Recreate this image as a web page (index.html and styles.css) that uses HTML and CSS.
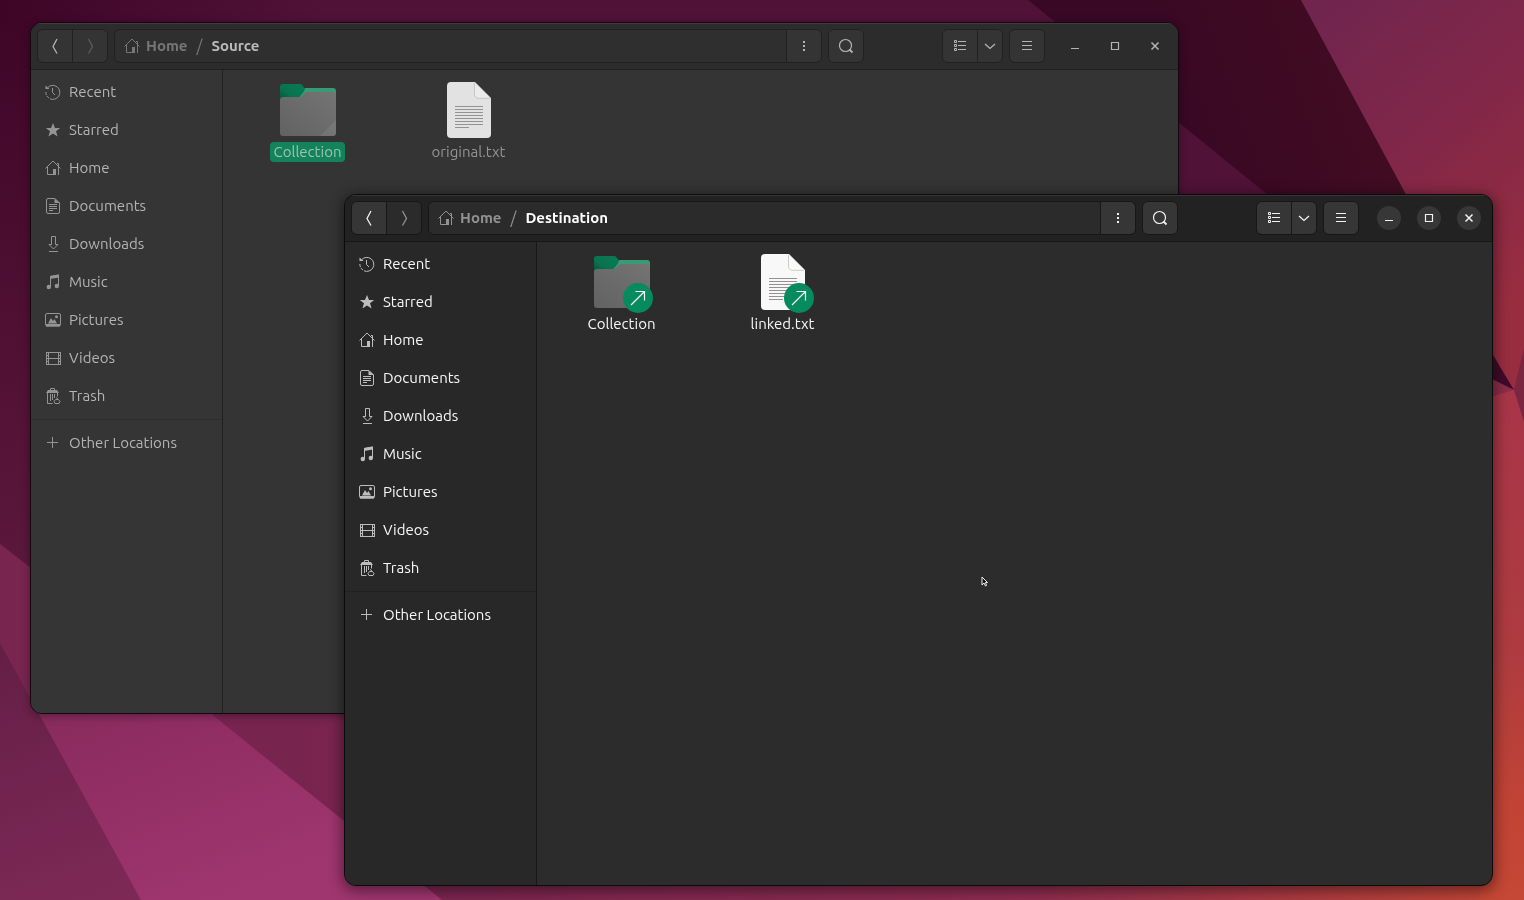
FILE: index.html
```
<!DOCTYPE html>
<html lang="en">
<head>
<meta charset="utf-8">
<title>Files</title>
<link rel="stylesheet" href="styles.css">
</head>
<body>
<svg class="defs" aria-hidden="true">
  <defs>
    <linearGradient id="tab" x1="0" y1="1" x2="1" y2="0"><stop offset="0" stop-color="#0d4a35"/><stop offset="0.4" stop-color="#08744f"/><stop offset="1" stop-color="#0b7a54"/></linearGradient>
    <linearGradient id="front" x1="0" y1="1" x2="1" y2="0"><stop offset="0" stop-color="#626262"/><stop offset="1" stop-color="#747474"/></linearGradient>
  </defs>
  <symbol id="recent" viewBox="0 0 16 16"><g fill="none" stroke="currentColor"><path d="M2.700 3.600A7 7 0 1 1 5 14.800"/><path d="M4 14.100A7 7 0 0 1 1 7" stroke-dasharray="3 1"/><path d="M7.500 4v4.500l2.500 2.500"/></g><path fill="currentColor" d="M0.500 1.500v3.500H4.500z"/></symbol>
  <symbol id="star" viewBox="0 0 16 16"><path fill="currentColor" d="M8 1l2 5h5.200L11 9.300 12.600 14.500 8 11.400 3.400 14.500 5 9.300 0.800 6H6z"/></symbol>
  <symbol id="home" viewBox="0 0 16 16"><g fill="none" stroke="currentColor"><path d="M0.500 8.500L8 1l7.500 7.500"/><path d="M2.500 7v7.500h6M13.500 15V3.500h-1.500"/></g><path fill="currentColor" d="M8 9h3v6H8z"/></symbol>
  <symbol id="documents" viewBox="0 0 16 16"><path fill="none" stroke="currentColor" d="M10 0.500H3A1.500 1.500 0 0 0 1.500 2v12A1.500 1.500 0 0 0 3 15.500h10a1.500 1.500 0 0 0 1.500-1.500V5zM4 6.500h8M4 8.500h8M4 10.500h8M4 12.500h4"/><path fill="currentColor" d="M9.500 0.500V5H15z"/></symbol>
  <symbol id="downloads" viewBox="0 0 16 16"><path fill="none" stroke="currentColor" d="M6.500 0.500h4v8H13L8.500 13 4 8.500h2.500zM4 15.500h9"/></symbol>
  <symbol id="music" viewBox="0 0 16 16"><path fill="none" stroke="currentColor" d="M5.500 13V2.500L13.500 1v11"/><path fill="currentColor" d="M5 2l9-1.500v3L5 5z"/><circle cx="3.800" cy="13" r="2.200" fill="currentColor"/><circle cx="11.800" cy="12" r="2.200" fill="currentColor"/></symbol>
  <symbol id="pictures" viewBox="0 0 16 16"><rect x="0.500" y="1.500" width="15" height="12.500" rx="1.500" fill="none" stroke="currentColor"/><path fill="currentColor" d="M1 12h14v2.500H1zM3 11.500L6 6l2 3 1.500-2 2.500 4.500z"/><circle cx="11.500" cy="4.800" r="1.500" fill="currentColor"/></symbol>
  <symbol id="videos" viewBox="0 0 16 16"><path fill="none" stroke="currentColor" d="M1 2.500h15M1 14.500h15M1.500 2v13M3.500 2v13M13.500 2v13M15.500 2v13M4 8.500h9M2 5.500h1M2 8.500h1M2 11.500h1M14 5.500h1M14 8.500h1M14 11.500h1"/></symbol>
  <symbol id="trash" viewBox="0 0 16 16"><path fill="none" stroke="currentColor" d="M5.500 2V0.500h4V2M2.500 4.500v11h5M12.500 4.500v4M5.500 6v7M7.500 6v6M9.500 6v4M10.500 11.500h3l1.500 2-1 2H10l-1-2zM11 9.500l2 1.500"/><path fill="currentColor" d="M3 2h9l2 3H1z"/></symbol>
  <symbol id="plus" viewBox="0 0 16 16"><path fill="none" stroke="currentColor" d="M2 7.500h11M7.500 2v11"/></symbol>
  <symbol id="back" viewBox="0 0 16 16"><path fill="none" stroke="currentColor" stroke-width="1.300" d="M10 1L6 8.500l4 7"/></symbol>
  <symbol id="forward" viewBox="0 0 16 16"><path fill="none" stroke="currentColor" stroke-width="1.300" d="M6.500 1l4 7.500-4 7"/></symbol>
  <symbol id="dots" viewBox="0 0 16 16"><path fill="currentColor" d="M7 3h2v2H7zM7 7h2v2H7zM7 11h2v2H7z"/></symbol>
  <symbol id="search" viewBox="0 0 16 16"><circle cx="7.500" cy="7.500" r="6" fill="none" stroke="currentColor" stroke-width="1.200"/><path d="M11.500 11.500L14.500 14.500" stroke="currentColor" stroke-width="1.800"/></symbol>
  <symbol id="list" viewBox="0 0 16 16"><path fill="none" stroke="currentColor" d="M2.500 2.500h2v2h-2zM2.500 6.500h2v2h-2zM2.500 10.500h2v2h-2zM6 3.500h8M6 7.500h8M6 11.500h8"/></symbol>
  <symbol id="down" viewBox="0 0 16 16"><path fill="none" stroke="currentColor" stroke-width="1.300" d="M3 6l5 4.500L13 6"/></symbol>
  <symbol id="menu" viewBox="0 0 16 16"><path fill="none" stroke="currentColor" d="M3 3.500h10M3 7.500h10M3 11.500h10"/></symbol>
  <symbol id="minimize" viewBox="0 0 16 16"><path stroke="currentColor" d="M4 10.500h8"/></symbol>
  <symbol id="maximize" viewBox="0 0 16 16"><path fill="none" stroke="currentColor" stroke-width="1.200" d="M4.500 4.500h7v7h-7z"/></symbol>
  <symbol id="close" viewBox="0 0 16 16"><path stroke="currentColor" stroke-width="1.500" d="M4.500 4.500l7 7M11.500 4.500l-7 7"/></symbol>
  <symbol id="folder" viewBox="0 0 64 64"><path fill="#379c75" d="M4 20V14h4l22-4h27a3 3 0 0 1 3 3v10H4z"/><path fill="url(#tab)" d="M4 23V9a3 3 0 0 1 3-3h17q2 0 3 2l2 3q-1 3-3 5L20 23z"/><path fill="url(#front)" d="M4 22a3 3 0 0 1 3-3h16q2 0 3-1l3-3q1-1 3-1h25a3 3 0 0 1 3 3v38a3 3 0 0 1-3 3H7a3 3 0 0 1-3-3z"/><path fill="#fff" fill-opacity="0.070" d="M60 42v13a3 3 0 0 1-3 3H44z"/></symbol>
  <symbol id="file" viewBox="0 0 64 64"><path fill="currentColor" d="M14 4h24l16 16v36a4 4 0 0 1-4 4H14a4 4 0 0 1-4-4V8a4 4 0 0 1 4-4z"/><path fill="#fff" fill-opacity="0.300" stroke="#b9b9b2" stroke-width="0.700" d="M37.500 5v11a4 4 0 0 0 4 4.300H53"/><path stroke="#929292" d="M18 28.500h28M18 31.500h28M18 34.500h28M18 37.500h28M18 40.500h28M18 43.500h28M18 46.500h28M18 49.500h14"/></symbol>
  <symbol id="link" viewBox="0 0 30 30"><circle cx="15" cy="15" r="15" fill="#058b5e"/><path fill="none" stroke="#fff" stroke-width="1.200" d="M8 22L21.500 8.500M12.500 8.500h9v9"/></symbol>
</svg>

<svg class="wallpaper" viewBox="0 0 1524 900" preserveAspectRatio="none" aria-hidden="true">
  <defs>
    <linearGradient id="w1" gradientUnits="userSpaceOnUse" x1="0" y1="0" x2="320" y2="0"><stop offset="0" stop-color="#3e0527"/><stop offset="1" stop-color="#501237"/></linearGradient>
    <linearGradient id="w1b" x1="0" y1="0" x2="0" y2="1"><stop offset="0" stop-color="#3f0628"/><stop offset="1" stop-color="#5c183d"/></linearGradient>
    <linearGradient id="w2" gradientUnits="userSpaceOnUse" x1="1200" y1="150" x2="1400" y2="80"><stop offset="0" stop-color="#390824"/><stop offset="1" stop-color="#430d21"/></linearGradient>
    <linearGradient id="w3" gradientUnits="userSpaceOnUse" x1="1330" y1="0" x2="1560" y2="260"><stop offset="0" stop-color="#70254f"/><stop offset="0.500" stop-color="#822748"/><stop offset="1" stop-color="#982d40"/></linearGradient>
    <linearGradient id="w4" gradientUnits="userSpaceOnUse" x1="0" y1="388" x2="0" y2="900"><stop offset="0" stop-color="#a83548"/><stop offset="0.500" stop-color="#ad3b40"/><stop offset="0.800" stop-color="#c04335"/><stop offset="1" stop-color="#c54735"/></linearGradient>
    <linearGradient id="w5" gradientUnits="userSpaceOnUse" x1="120" y1="650" x2="220" y2="900"><stop offset="0" stop-color="#852a5a"/><stop offset="0.500" stop-color="#932f65"/><stop offset="1" stop-color="#a0366f"/></linearGradient>
    <linearGradient id="w6" gradientUnits="userSpaceOnUse" x1="0" y1="640" x2="100" y2="900"><stop offset="0" stop-color="#641e46"/><stop offset="1" stop-color="#7d2956"/></linearGradient>
    <linearGradient id="w7" gradientUnits="userSpaceOnUse" x1="300" y1="0" x2="1524" y2="0"><stop offset="0" stop-color="#77244f"/><stop offset="0.600" stop-color="#8f2d50"/><stop offset="1" stop-color="#c54735"/></linearGradient>
  </defs>
  <path fill="url(#w1)" d="M0 0h1524v900H0z"/>
  <path fill="url(#w1b)" d="M0 22h60v560H0z"/>
  <path fill="url(#w2)" d="M1028 0h273l120 221h-121z"/>
  <path fill="url(#w3)" d="M1301 0h223v400h-7z"/>
  <path fill="url(#w7)" d="M200 700h1324v200H200z"/>
  <path fill="url(#w4)" d="M1480 376l34 14 10 27v483h-44z"/>
  <path fill="#400a2a" d="M1490 350l24 40-24-12z"/>
  <path fill="#8b2d49" d="M1490 378l24 12-24 7z"/>
  <path fill="#7b2641" d="M1514 390l10-42v74z"/>
  <path fill="#7b2651" d="M0 544l214 170v186H0z"/>
  <path fill="url(#w5)" d="M31 700h163l248 200H140L0 643v-40z"/>
  <path fill="#78254f" d="M0 544l32 25v133L0 643z"/>
  <path fill="url(#w6)" d="M0 643l141 257H0z"/>
</svg>

<main class="desktop">
  <section class="window window-source" aria-label="Source">
    <header class="bar">
      <div class="group">
        <button class="tool" aria-label="Back"><svg class="icon"><use href="#back"/></svg></button>
        <button class="tool dim" aria-label="Forward"><svg class="icon"><use href="#forward"/></svg></button>
      </div>
      <div class="group path">
        <nav class="crumbs" aria-label="Path">
          <a class="crumb" href="#"><svg class="icon"><use href="#home"/></svg>Home</a>
          <span class="slash">/</span>
          <a class="crumb current" href="#">Source</a>
        </nav>
        <button class="tool" aria-label="Folder options"><svg class="icon"><use href="#dots"/></svg></button>
      </div>
      <div class="group"><button class="tool" aria-label="Search"><svg class="icon"><use href="#search"/></svg></button></div>
      <div class="group view">
        <button class="tool" aria-label="List view"><svg class="icon"><use href="#list"/></svg></button>
        <button class="tool narrow" aria-label="View options"><svg class="icon"><use href="#down"/></svg></button>
      </div>
      <div class="group"><button class="tool" aria-label="Menu"><svg class="icon"><use href="#menu"/></svg></button></div>
      <div class="controls">
        <button class="control" aria-label="Minimize"><svg class="icon"><use href="#minimize"/></svg></button>
        <button class="control" aria-label="Maximize"><svg class="icon"><use href="#maximize"/></svg></button>
        <button class="control" aria-label="Close"><svg class="icon"><use href="#close"/></svg></button>
      </div>
    </header>
    <div class="body">
      <nav class="sidebar" aria-label="Places">
        <a class="place" href="#"><svg class="icon"><use href="#recent"/></svg>Recent</a>
        <a class="place" href="#"><svg class="icon"><use href="#star"/></svg>Starred</a>
        <a class="place" href="#"><svg class="icon"><use href="#home"/></svg>Home</a>
        <a class="place" href="#"><svg class="icon"><use href="#documents"/></svg>Documents</a>
        <a class="place" href="#"><svg class="icon"><use href="#downloads"/></svg>Downloads</a>
        <a class="place" href="#"><svg class="icon"><use href="#music"/></svg>Music</a>
        <a class="place" href="#"><svg class="icon"><use href="#pictures"/></svg>Pictures</a>
        <a class="place" href="#"><svg class="icon"><use href="#videos"/></svg>Videos</a>
        <a class="place" href="#"><svg class="icon"><use href="#trash"/></svg>Trash</a>
        <hr class="rule">
        <a class="place" href="#"><svg class="icon"><use href="#plus"/></svg>Other Locations</a>
      </nav>
      <div class="files">
        <a class="item selected" href="#"><span class="thumb"><svg class="art"><use href="#folder"/></svg></span><span class="name">Collection</span></a>
        <a class="item" href="#"><span class="thumb"><svg class="art"><use href="#file"/></svg></span><span class="name">original.txt</span></a>
      </div>
    </div>
  </section>

  <section class="window window-destination" aria-label="Destination">
    <header class="bar">
      <div class="group">
        <button class="tool" aria-label="Back"><svg class="icon"><use href="#back"/></svg></button>
        <button class="tool dim" aria-label="Forward"><svg class="icon"><use href="#forward"/></svg></button>
      </div>
      <div class="group path">
        <nav class="crumbs" aria-label="Path">
          <a class="crumb" href="#"><svg class="icon"><use href="#home"/></svg>Home</a>
          <span class="slash">/</span>
          <a class="crumb current" href="#">Destination</a>
        </nav>
        <button class="tool" aria-label="Folder options"><svg class="icon"><use href="#dots"/></svg></button>
      </div>
      <div class="group"><button class="tool" aria-label="Search"><svg class="icon"><use href="#search"/></svg></button></div>
      <div class="group view">
        <button class="tool" aria-label="List view"><svg class="icon"><use href="#list"/></svg></button>
        <button class="tool narrow" aria-label="View options"><svg class="icon"><use href="#down"/></svg></button>
      </div>
      <div class="group"><button class="tool" aria-label="Menu"><svg class="icon"><use href="#menu"/></svg></button></div>
      <div class="controls">
        <button class="control" aria-label="Minimize"><svg class="icon"><use href="#minimize"/></svg></button>
        <button class="control" aria-label="Maximize"><svg class="icon"><use href="#maximize"/></svg></button>
        <button class="control" aria-label="Close"><svg class="icon"><use href="#close"/></svg></button>
      </div>
    </header>
    <div class="body">
      <nav class="sidebar" aria-label="Places">
        <a class="place" href="#"><svg class="icon"><use href="#recent"/></svg>Recent</a>
        <a class="place" href="#"><svg class="icon"><use href="#star"/></svg>Starred</a>
        <a class="place" href="#"><svg class="icon"><use href="#home"/></svg>Home</a>
        <a class="place" href="#"><svg class="icon"><use href="#documents"/></svg>Documents</a>
        <a class="place" href="#"><svg class="icon"><use href="#downloads"/></svg>Downloads</a>
        <a class="place" href="#"><svg class="icon"><use href="#music"/></svg>Music</a>
        <a class="place" href="#"><svg class="icon"><use href="#pictures"/></svg>Pictures</a>
        <a class="place" href="#"><svg class="icon"><use href="#videos"/></svg>Videos</a>
        <a class="place" href="#"><svg class="icon"><use href="#trash"/></svg>Trash</a>
        <hr class="rule">
        <a class="place" href="#"><svg class="icon"><use href="#plus"/></svg>Other Locations</a>
      </nav>
      <div class="files">
        <a class="item" href="#"><span class="thumb"><svg class="art"><use href="#folder"/></svg><svg class="badge"><use href="#link"/></svg></span><span class="name">Collection</span></a>
        <a class="item" href="#"><span class="thumb"><svg class="art"><use href="#file"/></svg><svg class="badge"><use href="#link"/></svg></span><span class="name">linked.txt</span></a>
      </div>
    </div>
  </section>

  <svg class="pointer" viewBox="0 0 8 12" aria-hidden="true"><path fill="#161616" stroke="#eee" d="M1 1v8l2-2 1.500 3 1-0.500L4.500 6.500H6.500z"/></svg>
</main>
</body>
</html>
```

FILE: styles.css
```
* {
  box-sizing: border-box;
}

body {
  margin: 0;
  background: #4a1033;
  font: 15px/20px "Ubuntu", "Noto Sans", sans-serif;
}

a {
  color: inherit;
  text-decoration: none;
}

button {
  margin: 0;
  padding: 0;
  border: 0;
  color: inherit;
  font: inherit;
}

.defs {
  position: absolute;
  width: 0;
  height: 0;
}

.wallpaper {
  position: fixed;
  inset: 0;
  width: 100%;
  height: 100%;
}

.desktop {
  position: relative;
  height: 100vh;
  overflow: hidden;
}

.window {
  position: absolute;
  display: flex;
  flex-direction: column;
  overflow: hidden;
  border: 1px solid var(--edge);
  border-radius: 12px;
  background: var(--content);
  color: var(--text);
}

.window-source {
  --edge: #160610;
  --header: #2c2c2c;
  --side: #353535;
  --content: #343434;
  --line: #212121;
  --button: #343434;
  --back: #343434;
  --path: #2f2f2f;
  --shine: #3e3e3e;
  --text: #b4b4b4;
  --strong: #bcbcbc;
  --muted: #777;
  --glyph: #b4b4b4;
  --icon: #949494;
  --name: #949494;
  --sheet: #e2e2e2;
  --control: transparent;
  inset: 22px 345px 186px 30px;
  box-shadow: 0 2px 8px rgba(0, 0, 0, 0.35);
}

.window-destination {
  --edge: #0b0b0b;
  --header: #222;
  --side: #282828;
  --content: #2c2c2c;
  --line: #171717;
  --button: #363636;
  --back: #383838;
  --path: #2b2b2b;
  --shine: #363636;
  --text: #f7f7f7;
  --strong: #fff;
  --muted: #929292;
  --glyph: #f2f2f2;
  --icon: #bdbdbd;
  --name: #f7f7f7;
  --sheet: #f8f8f8;
  --control: #373737;
  inset: 194px 31px 14px 344px;
  box-shadow: 0 3px 14px 2px rgba(0, 0, 0, 0.45);
}

.bar {
  display: flex;
  gap: 6px;
  padding: 6px;
  border-bottom: 1px solid var(--line);
  background: var(--header);
  box-shadow: inset 0 1px var(--shine);
  color: var(--glyph);
}

.icon {
  flex: none;
  width: 16px;
  height: 16px;
}

.group {
  display: flex;
  overflow: hidden;
  border: 1px solid var(--line);
  border-radius: 6px;
}

.tool {
  display: flex;
  align-items: center;
  justify-content: center;
  width: 34px;
  height: 32px;
  background: var(--button);
}

.tool + .tool,
.crumbs + .tool {
  width: 35px;
  border-left: 1px solid var(--line);
}

.tool + .narrow {
  width: 25px;
}

.dim {
  background: var(--path);
  color: var(--muted);
}

.window-source .dim {
  background: var(--button);
  color: #5c5c5c;
}

.path {
  flex: 1;
}

.crumbs {
  display: flex;
  flex: 1;
  align-items: center;
  gap: 9px;
  padding-left: 9px;
  background: var(--path);
  color: var(--muted);
  font-weight: 700;
}

.crumb {
  display: flex;
  align-items: center;
  gap: 6px;
}

.current {
  color: var(--strong);
}

.slash {
  font-size: 16px;
  font-weight: 400;
}

.view {
  margin-left: 72px;
}

.controls {
  display: flex;
  align-items: center;
  gap: 16px;
  padding: 0 5px 0 12px;
}

.control {
  display: grid;
  place-items: center;
  width: 24px;
  height: 24px;
  border-radius: 50%;
  background: var(--control);
}

.body {
  display: flex;
  flex: 1;
}

.sidebar {
  flex: none;
  width: 192px;
  padding-top: 3px;
  border-right: 1px solid var(--line);
  background: var(--side);
}

.place {
  display: flex;
  align-items: center;
  gap: 8px;
  height: 38px;
  padding-left: 14px;
}

.place .icon {
  color: var(--icon);
}

.rule {
  height: 1px;
  margin: 4px 0;
  border: 0;
  background: color-mix(in srgb, var(--line) 40%, var(--side));
}

.files {
  display: flex;
  flex: 1;
  align-items: flex-start;
  padding: 8px 4px;
}

.item {
  display: flex;
  flex-direction: column;
  align-items: center;
  width: 161px;
  color: var(--name);
}

.thumb {
  position: relative;
  width: 64px;
  height: 64px;
  color: var(--sheet);
}

.art {
  display: block;
  width: 64px;
  height: 64px;
}

.badge {
  position: absolute;
  right: 1px;
  bottom: 1px;
  width: 30px;
  height: 30px;
}

.name {
  padding: 0 4px;
  border-radius: 4px;
}

.selected .name {
  background: #14835c;
  color: #9bc4b2;
}

.pointer {
  position: absolute;
  top: 576px;
  left: 981px;
  width: 8px;
  height: 12px;
}
```
